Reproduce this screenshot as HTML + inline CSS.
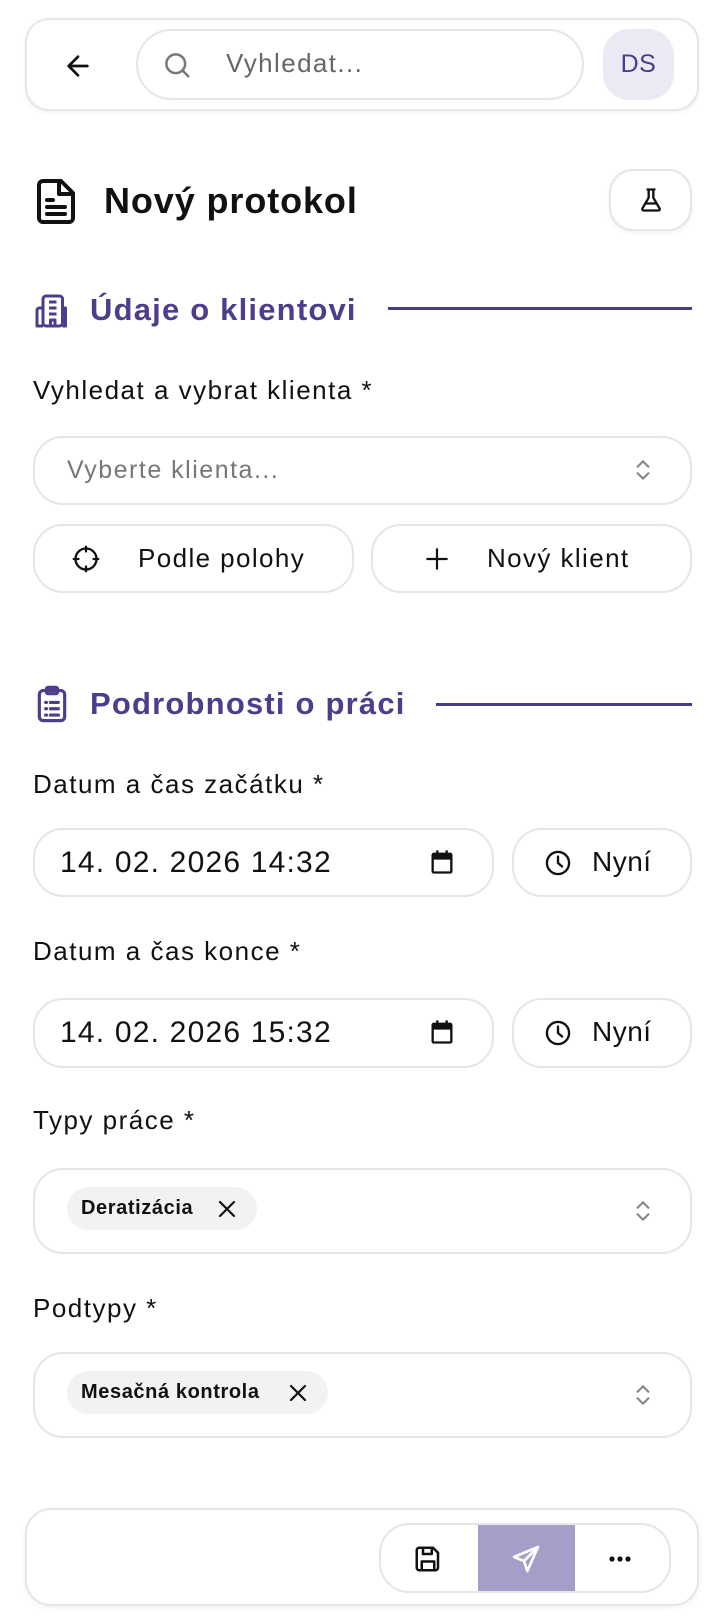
<!DOCTYPE html>
<html><head><meta charset="utf-8"><style>
*{box-sizing:border-box;margin:0;padding:0}
body{width:720px;height:1624px;background:#fff;font-family:"Liberation Sans",sans-serif;color:#111;position:relative;overflow:hidden}
.abs{position:absolute;white-space:nowrap}
.box{position:absolute;border:2px solid #e6e6e6;background:#fff}
.lbl{position:absolute;left:33px;font-size:26px;line-height:30px;letter-spacing:1.5px;white-space:nowrap}
.sec{position:absolute;color:#4e3d8a;font-weight:bold;font-size:31px;line-height:36px;letter-spacing:1.2px;white-space:nowrap}
.line{position:absolute;height:3px;background:#4a3c88;right:28px}
svg{position:absolute}
</style></head><body>
<div class="box" style="left:25px;top:18px;width:674px;height:93px;border-radius:24px;box-shadow:0 2px 4px rgba(0,0,0,.05)"></div>
<svg style="left:62px;top:50px" width="32" height="32" viewBox="0 0 24 24" fill="none" stroke="#111" stroke-width="2" stroke-linecap="round" stroke-linejoin="round"><path d="M19 12H5M12 19l-7-7 7-7"/></svg>
<div class="box" style="left:136px;top:29px;width:448px;height:71px;border-radius:36px"></div>
<svg style="left:162px;top:50px" width="30" height="30" viewBox="0 0 24 24" fill="none" stroke="#777" stroke-width="2" stroke-linecap="round"><circle cx="11" cy="11" r="7.5"/><path d="M16.5 16.5L21 21"/></svg>
<div class="abs" style="left:226px;top:47px;font-size:26px;color:#666;line-height:32px;letter-spacing:1.4px">Vyhledat...</div>
<div class="abs" style="left:603px;top:29px;width:71px;height:71px;border-radius:26px;background:#ece9f5;color:#4a3d8c;font-size:25px;line-height:71px;text-align:center;letter-spacing:.5px">DS</div>

<svg style="left:37px;top:178px" width="40" height="46" viewBox="0 0 20 23" fill="none" stroke="#111" stroke-width="2" stroke-linejoin="round" stroke-linecap="round"><path d="M3 1.5h9l6 6v12.5a2 2 0 0 1-2 2H3a2 2 0 0 1-2-2V3.5a2 2 0 0 1 2-2z"/><path d="M11 1.5v6.5h7M5 11h3M5 14.5h9M5 18h9"/></svg>
<div class="abs" style="left:104px;top:181px;font-size:36px;font-weight:bold;line-height:40px;letter-spacing:.9px">Nový protokol</div>
<div class="box" style="left:609px;top:169px;width:83px;height:62px;border-radius:24px;box-shadow:0 2px 4px rgba(0,0,0,.06)"></div>
<svg style="left:637px;top:186px" width="28" height="28" viewBox="0 0 24 24" fill="none" stroke="#111" stroke-width="2" stroke-linejoin="round" stroke-linecap="round"><path d="M9 3h6M10 3v7L4.5 19.5A1.2 1.2 0 0 0 5.5 21h13a1.2 1.2 0 0 0 1-1.5L14 10V3M7 15h10"/></svg>

<svg style="left:34px;top:293px" width="36" height="36" viewBox="0 0 24 24" fill="none" stroke="#4e3d8a" stroke-width="2" stroke-linejoin="round"><rect x="6" y="2" width="13" height="20" rx="2"/><path d="M6 10H3.5a1.5 1.5 0 0 0-1.5 1.5V22h4M19 10h2v12h-2M10 6h5M10 10h5M10 14h5M11 22v-4h3v4"/></svg>
<div class="sec" style="left:90px;top:292px">Údaje o klientovi</div>
<div class="line" style="left:388px;top:307px"></div>
<div class="lbl" style="top:375px">Vyhledat a vybrat klienta *</div>
<div class="box" style="left:33px;top:436px;width:659px;height:69px;border-radius:30px"></div>
<div class="abs" style="left:67px;top:455px;font-size:25px;color:#777;line-height:30px;letter-spacing:1.5px">Vyberte klienta...</div>
<svg style="left:630px;top:456px" width="26" height="28" viewBox="0 0 24 24" fill="none" stroke="#888" stroke-width="2" stroke-linecap="round" stroke-linejoin="round"><path d="M7 9l5-5 5 5M7 15l5 5 5-5"/></svg>
<div class="box" style="left:33px;top:524px;width:321px;height:69px;border-radius:30px"></div>
<svg style="left:72px;top:545px" width="28" height="28" viewBox="0 0 24 24" fill="none" stroke="#111" stroke-width="2" stroke-linecap="round"><circle cx="12" cy="12" r="9"/><path d="M12 1.5v4M12 18.5v4M1.5 12h4M18.5 12h4"/></svg>
<div class="abs" style="left:138px;top:543px;font-size:26px;line-height:30px;letter-spacing:1.4px">Podle polohy</div>
<div class="box" style="left:371px;top:524px;width:321px;height:69px;border-radius:30px"></div>
<svg style="left:424px;top:546px" width="26" height="26" viewBox="0 0 24 24" fill="none" stroke="#111" stroke-width="2" stroke-linecap="round"><path d="M12 3v18M3 12h18"/></svg>
<div class="abs" style="left:487px;top:543px;font-size:26px;line-height:30px;letter-spacing:1.4px">Nový klient</div>

<svg style="left:35px;top:685px" width="34" height="38" viewBox="0 0 20 24" fill="none" stroke="#4e3d8a" stroke-width="2" stroke-linecap="round" stroke-linejoin="round"><rect x="2" y="3.5" width="16" height="19" rx="2.5"/><rect x="6.5" y="1.5" width="7" height="4" rx="1"/><path d="M6 11h.5M9 11h5M6 15h.5M9 15h5M6 19h.5M9 19h5"/></svg>
<div class="sec" style="left:90px;top:686px">Podrobnosti o práci</div>
<div class="line" style="left:436px;top:703px"></div>

<div class="lbl" style="top:769px">Datum a čas začátku *</div>
<div class="box" style="left:33px;top:828px;width:461px;height:69px;border-radius:30px"></div>
<div class="abs" style="left:60px;top:846px;font-size:30px;line-height:34px;letter-spacing:1.2px">14. 02. 2026 14:32</div>
<svg style="left:428px;top:847px" width="28" height="30" viewBox="0 0 24 24"><path fill="#111" d="M5 4h2V2h2v2h6V2h2v2h2a2 2 0 0 1 2 2v14a2 2 0 0 1-2 2H5a2 2 0 0 1-2-2V6a2 2 0 0 1 2-2zm0 6v10h14V10z"/></svg>
<div class="box" style="left:512px;top:828px;width:180px;height:69px;border-radius:30px"></div>
<svg style="left:544px;top:849px" width="28" height="28" viewBox="0 0 24 24" fill="none" stroke="#111" stroke-width="2" stroke-linecap="round"><circle cx="12" cy="12" r="9.5"/><path d="M12 6.5V12l3.5 3"/></svg>
<div class="abs" style="left:592px;top:846px;font-size:28px;line-height:32px;letter-spacing:.5px">Nyní</div>

<div class="lbl" style="top:936px">Datum a čas konce *</div>
<div class="box" style="left:33px;top:998px;width:461px;height:70px;border-radius:30px"></div>
<div class="abs" style="left:60px;top:1016px;font-size:30px;line-height:34px;letter-spacing:1.2px">14. 02. 2026 15:32</div>
<svg style="left:428px;top:1017px" width="28" height="30" viewBox="0 0 24 24"><path fill="#111" d="M5 4h2V2h2v2h6V2h2v2h2a2 2 0 0 1 2 2v14a2 2 0 0 1-2 2H5a2 2 0 0 1-2-2V6a2 2 0 0 1 2-2zm0 6v10h14V10z"/></svg>
<div class="box" style="left:512px;top:998px;width:180px;height:70px;border-radius:30px"></div>
<svg style="left:544px;top:1019px" width="28" height="28" viewBox="0 0 24 24" fill="none" stroke="#111" stroke-width="2" stroke-linecap="round"><circle cx="12" cy="12" r="9.5"/><path d="M12 6.5V12l3.5 3"/></svg>
<div class="abs" style="left:592px;top:1016px;font-size:28px;line-height:32px;letter-spacing:.5px">Nyní</div>

<div class="lbl" style="top:1105px">Typy práce *</div>
<div class="box" style="left:33px;top:1168px;width:659px;height:86px;border-radius:30px"></div>
<div class="abs" style="left:67px;top:1187px;width:190px;height:43px;border-radius:22px;background:#f2f2f2"></div>
<div class="abs" style="left:81px;top:1196px;font-size:20px;font-weight:bold;line-height:24px;letter-spacing:.6px">Deratizácia</div>
<svg style="left:215px;top:1197px" width="24" height="24" viewBox="0 0 24 24" fill="none" stroke="#111" stroke-width="2.2" stroke-linecap="round"><path d="M5 5l14 14M19 5L5 19"/></svg>
<svg style="left:630px;top:1197px" width="26" height="28" viewBox="0 0 24 24" fill="none" stroke="#888" stroke-width="2" stroke-linecap="round" stroke-linejoin="round"><path d="M7 9l5-5 5 5M7 15l5 5 5-5"/></svg>

<div class="lbl" style="top:1293px">Podtypy *</div>
<div class="box" style="left:33px;top:1352px;width:659px;height:86px;border-radius:30px"></div>
<div class="abs" style="left:67px;top:1371px;width:261px;height:43px;border-radius:22px;background:#f2f2f2"></div>
<div class="abs" style="left:81px;top:1380px;font-size:20px;font-weight:bold;line-height:24px;letter-spacing:.6px">Mesačná kontrola</div>
<svg style="left:286px;top:1381px" width="24" height="24" viewBox="0 0 24 24" fill="none" stroke="#111" stroke-width="2.2" stroke-linecap="round"><path d="M5 5l14 14M19 5L5 19"/></svg>
<svg style="left:630px;top:1381px" width="26" height="28" viewBox="0 0 24 24" fill="none" stroke="#888" stroke-width="2" stroke-linecap="round" stroke-linejoin="round"><path d="M7 9l5-5 5 5M7 15l5 5 5-5"/></svg>

<div class="box" style="left:25px;top:1508px;width:674px;height:98px;border-radius:26px;box-shadow:0 2px 6px rgba(0,0,0,.06)"></div>
<div class="box" style="left:379px;top:1523px;width:292px;height:70px;border-radius:30px;overflow:hidden">
<div class="abs" style="left:97px;top:-2px;width:97px;height:72px;background:#a69ec8"></div>
</div>
<svg style="left:413px;top:1544px" width="30" height="30" viewBox="0 0 24 24" fill="none" stroke="#111" stroke-width="2" stroke-linejoin="round"><path d="M5 3h11l4 4v12a2 2 0 0 1-2 2H5a2 2 0 0 1-2-2V5a2 2 0 0 1 2-2z"/><path d="M8 3v5h7V3M7 21v-7h10v7"/></svg>
<svg style="left:510px;top:1543px" width="32" height="32" viewBox="0 0 24 24" fill="none" stroke="#fff" stroke-width="2" stroke-linejoin="round"><path d="M21 3L3 10.5l7.5 3L13 21z"/><path d="M10.5 13.5L21 3"/></svg>
<svg style="left:607px;top:1549px" width="26" height="20" viewBox="0 0 26 20" fill="#111"><circle cx="5" cy="10" r="2.6"/><circle cx="13" cy="10" r="2.6"/><circle cx="21" cy="10" r="2.6"/></svg>
</body></html>
